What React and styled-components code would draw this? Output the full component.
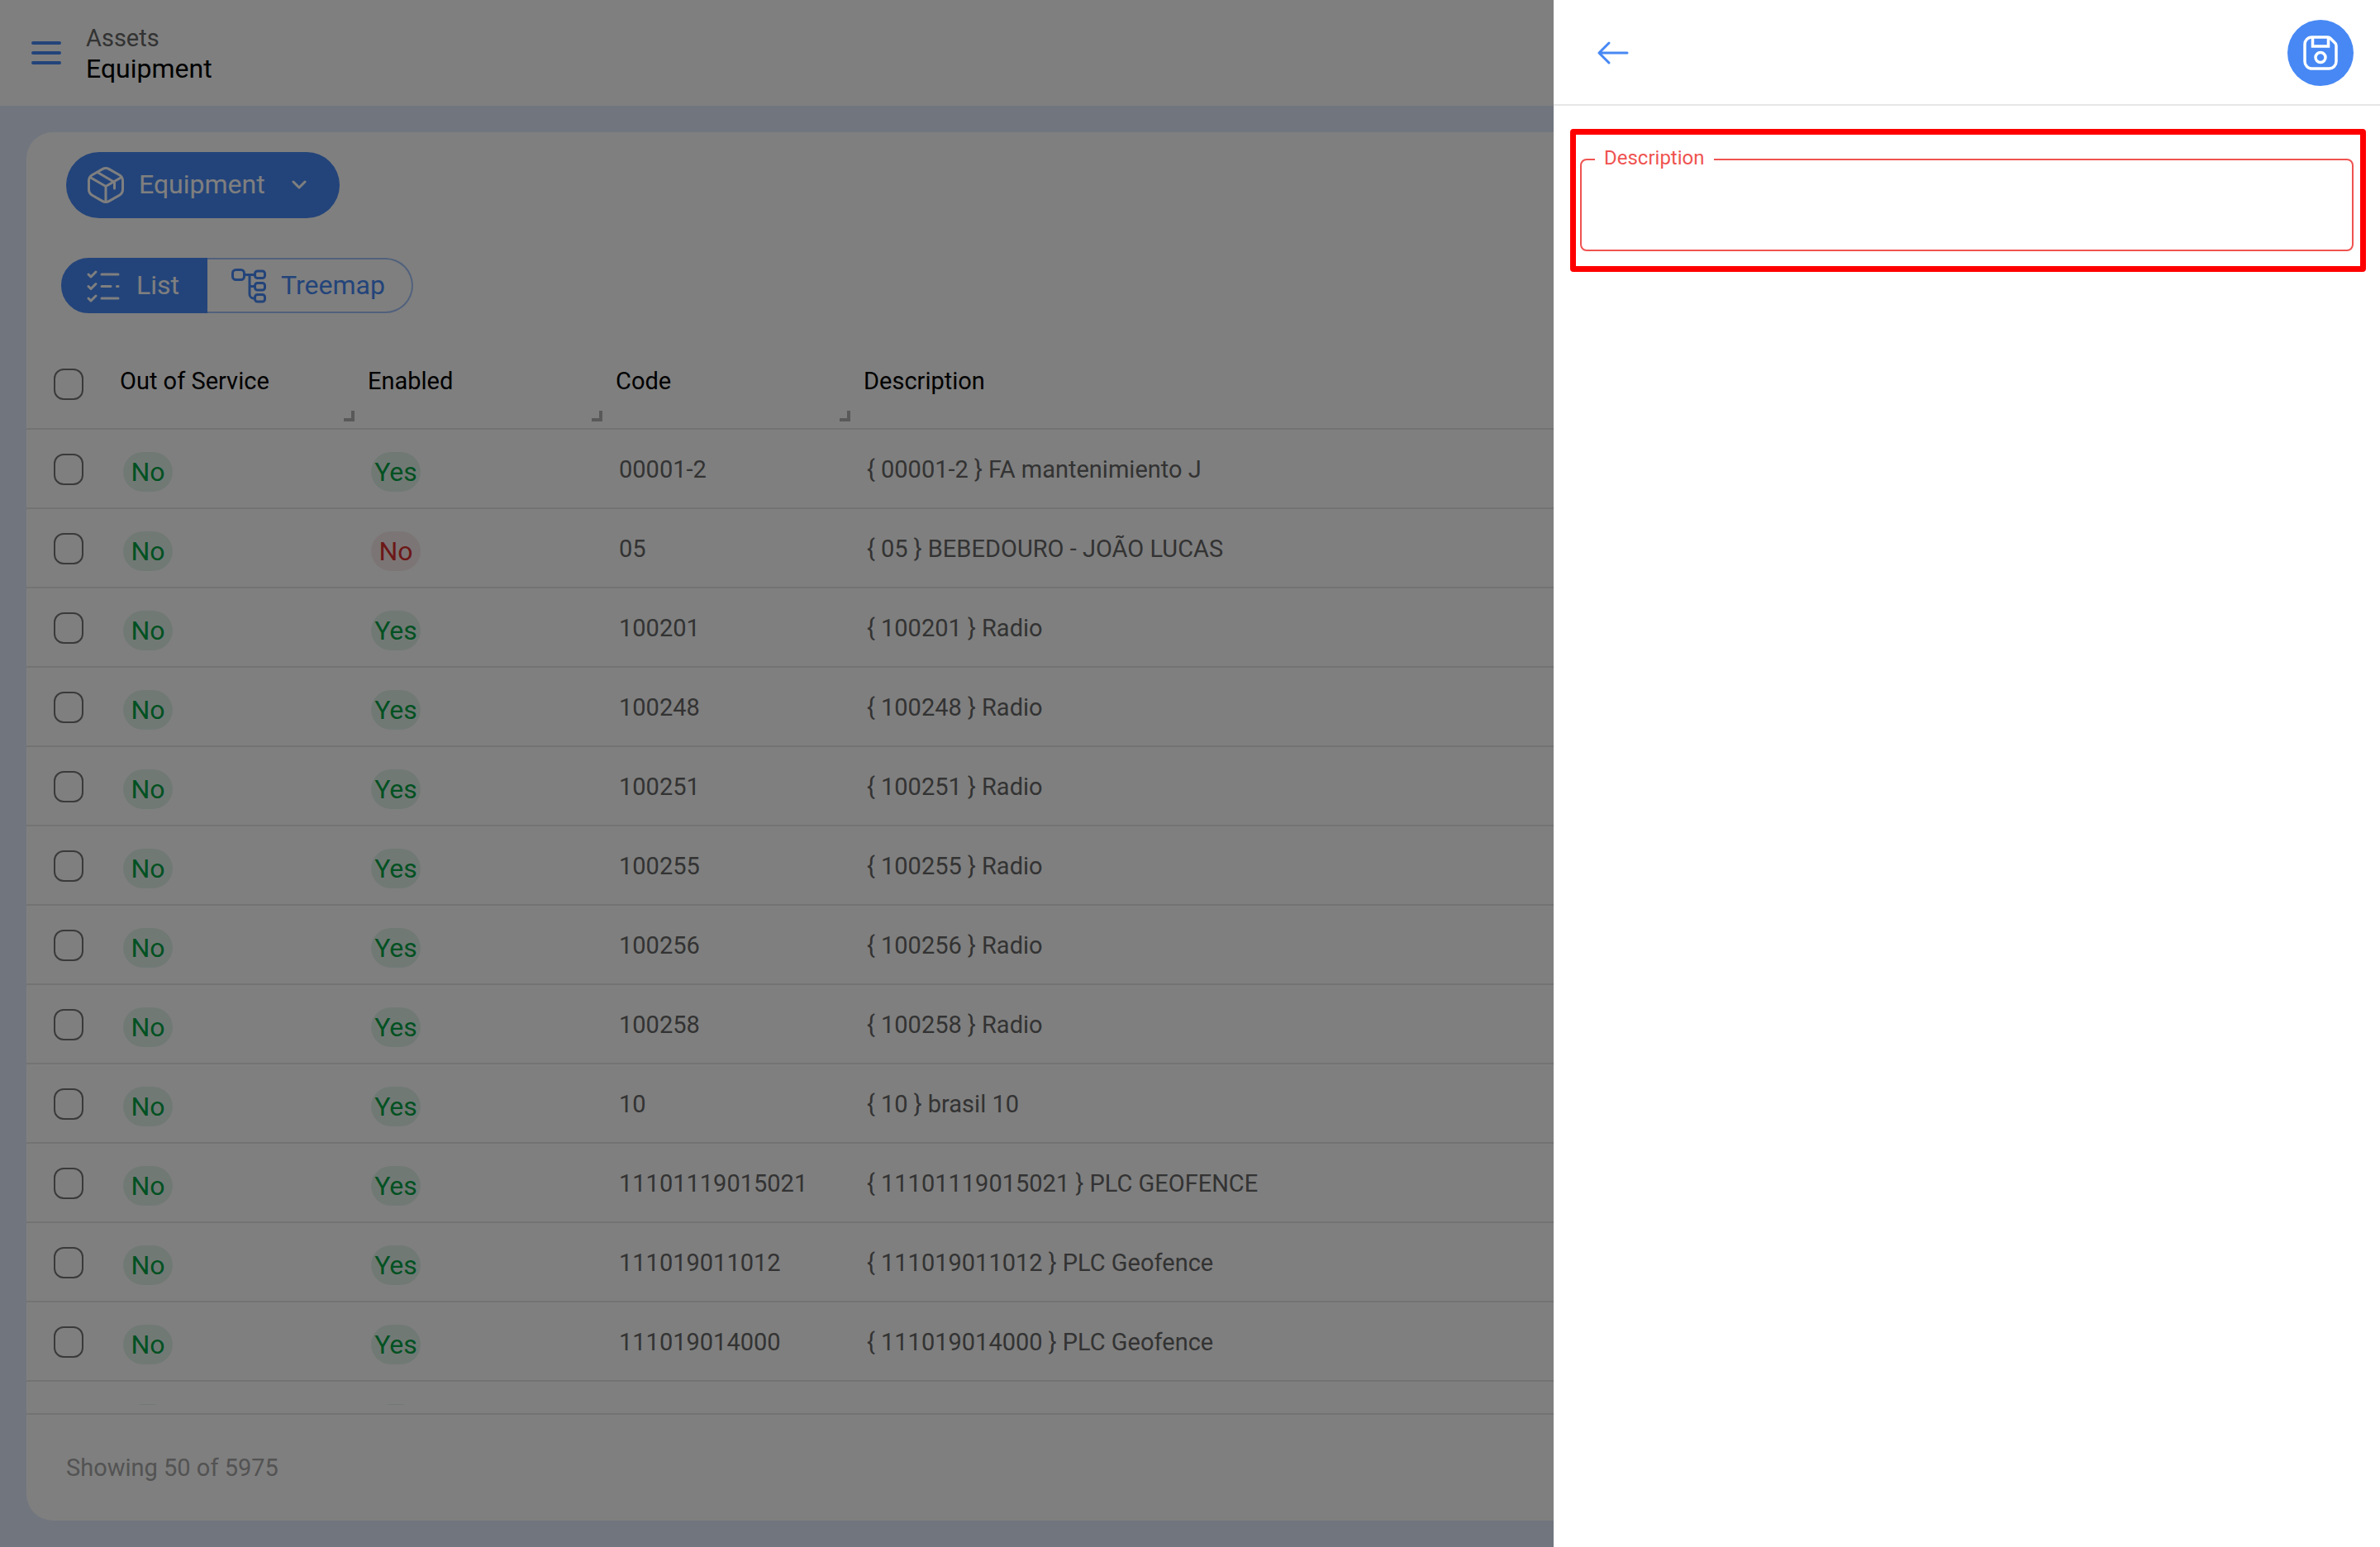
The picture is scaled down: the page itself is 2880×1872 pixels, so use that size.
import React from "react";
import styled, { createGlobalStyle, css } from "styled-components";

const rows = [
  { out: "No", enabled: "Yes", code: "00001-2", description: "{ 00001-2 } FA mantenimiento J" },
  { out: "No", enabled: "No", code: "05", description: "{ 05 } BEBEDOURO - JOÃO LUCAS" },
  { out: "No", enabled: "Yes", code: "100201", description: "{ 100201 } Radio" },
  { out: "No", enabled: "Yes", code: "100248", description: "{ 100248 } Radio" },
  { out: "No", enabled: "Yes", code: "100251", description: "{ 100251 } Radio" },
  { out: "No", enabled: "Yes", code: "100255", description: "{ 100255 } Radio" },
  { out: "No", enabled: "Yes", code: "100256", description: "{ 100256 } Radio" },
  { out: "No", enabled: "Yes", code: "100258", description: "{ 100258 } Radio" },
  { out: "No", enabled: "Yes", code: "10", description: "{ 10 } brasil 10" },
  { out: "No", enabled: "Yes", code: "11101119015021", description: "{ 11101119015021 } PLC GEOFENCE" },
  { out: "No", enabled: "Yes", code: "111019011012", description: "{ 111019011012 } PLC Geofence" },
  { out: "No", enabled: "Yes", code: "111019014000", description: "{ 111019014000 } PLC Geofence" },
];

const blue = "#4788f4";
const line = "#e6e6e6";
const error = "#ef5350";

const GlobalStyle = createGlobalStyle`
  * {
    box-sizing: border-box;
  }
  body {
    margin: 0;
    font-family: Roboto, "Liberation Sans", sans-serif;
    font-size: 29px;
    color: #000;
  }
  button, input {
    font-family: inherit;
  }
`;

const Page = styled.div`
  display: flex;
  flex-direction: column;
  height: 100vh;
  background: #e2eafc;
`;

const TopBar = styled.header`
  display: flex;
  align-items: center;
  gap: 20px;
  height: 128px;
  padding: 0 28px;
  background: #fff;
`;

const IconButton = styled.button`
  display: flex;
  align-items: center;
  justify-content: center;
  width: ${({ $size }) => $size}px;
  height: ${({ $size }) => $size}px;
  padding: 0;
  border: 0;
  border-radius: 50%;
  color: ${({ $filled }) => ($filled ? "#fff" : blue)};
  background: ${({ $filled }) => ($filled ? blue : "transparent")};
`;

const Titles = styled.div`
  display: flex;
  flex-direction: column;
  padding-top: 2px;
`;

const Section = styled.span`
  line-height: 36px;
  color: #666;
`;

const Title = styled.h1`
  margin: 0;
  font-size: 32px;
  font-weight: 400;
  line-height: 38px;
`;

const Card = styled.main`
  flex: 1;
  display: flex;
  flex-direction: column;
  min-height: 0;
  margin: 32px;
  border-radius: 32px;
  background: #fff;
`;

const Toolbar = styled.div`
  display: flex;
  flex-direction: column;
  align-items: flex-start;
  gap: 48px;
  padding: 24px 42px 37px;
`;

const ButtonLabel = styled.span`
  padding-bottom: 2px;
`;

const MenuButton = styled.button`
  display: flex;
  align-items: center;
  gap: 16px;
  height: 80px;
  margin-left: 6px;
  padding: 0 40px 0 24px;
  border: 0;
  border-radius: 40px;
  font-size: 32px;
  color: #fff;
  background: ${blue};

  svg:last-child {
    margin-left: 16px;
  }
`;

const Toggle = styled.div`
  display: flex;
`;

const ToggleButton = styled.button`
  display: flex;
  align-items: center;
  gap: 14px;
  height: 67px;
  padding: 0 32px 0 27px;
  border: 2px solid ${blue};
  font-size: 32px;

  ${({ $active }) =>
    $active
      ? css`
          border-radius: 34px 0 0 34px;
          color: #fff;
          background: ${blue};
        `
      : css`
          border-color: #a3c3f9;
          border-left: 0;
          border-radius: 0 34px 34px 0;
          color: ${blue};
          background: #fff;
        `}
`;

const TableWrap = styled.div`
  flex: 1;
  min-height: 0;
  margin-bottom: 10px;
  overflow: hidden;
`;

const Table = styled.table`
  width: 100%;
  table-layout: fixed;
  border-collapse: separate;
  border-spacing: 0;
`;

const HeadCell = styled.th`
  position: relative;
  width: ${({ $width }) => ($width ? `${$width}px` : "auto")};
  height: 104px;
  padding: 0 0 12px 12px;
  border-bottom: 2px solid ${line};
  font-weight: 400;
  text-align: left;
`;

const ResizeMark = styled.i`
  position: absolute;
  right: 4px;
  bottom: 8px;
  width: 13px;
  height: 13px;
  border: solid #b3b3b3;
  border-width: 0 4px 4px 0;
`;

const CheckCell = styled.td`
  width: 101px;
  height: 96px;
  padding: 2px 0 0 33px;
  border-bottom: 2px solid ${line};
`;

const HeadCheckCell = styled(CheckCell)`
  padding-bottom: 6px;
`;

const Cell = styled.td`
  height: 96px;
  padding: 2px 0 0 16px;
  border-bottom: 2px solid ${line};
  color: #666;
`;

const Checkbox = styled.input.attrs({ type: "checkbox" })`
  appearance: none;
  display: block;
  width: 36px;
  height: 38px;
  margin: 0;
  border: 2px solid #757575;
  border-radius: 12px;
`;

const Pill = styled.span`
  display: flex;
  align-items: center;
  justify-content: center;
  width: 60px;
  height: 48px;
  margin-top: 6px;
  border-radius: 24px;
  font-size: 32px;
  color: ${({ $bad }) => ($bad ? "#d9302f" : "#00a344")};
  background: ${({ $bad }) => ($bad ? "#f9ebea" : "#e3f3eb")};
`;

const Footer = styled.footer`
  display: flex;
  align-items: center;
  height: 130px;
  padding: 0 48px;
  border-top: 2px solid ${line};
  color: #a6a6a6;
`;

const Backdrop = styled.div`
  position: fixed;
  inset: 0;
  background: rgba(0, 0, 0, 0.5);
`;

const Drawer = styled.aside`
  position: fixed;
  top: 0;
  right: 0;
  bottom: 0;
  width: 1000px;
  max-width: 100%;
  background: #fff;
`;

const DrawerHeader = styled.div`
  display: flex;
  align-items: center;
  justify-content: space-between;
  height: 128px;
  padding: 2px 32px 0 48px;
  border-bottom: 2px solid ${line};
`;

const Highlight = styled.div`
  margin: 28px 17px 0 20px;
  padding: 14px 8px 18px 5px;
  border: 7px solid #f00;
  border-radius: 4px;
`;

const Field = styled.fieldset`
  min-width: 0;
  margin: 0;
  padding: 0 16px;
  border: 2px solid ${error};
  border-radius: 8px;
`;

const FieldLegend = styled.legend`
  padding: 0 11px 4px;
  font-size: 24px;
  line-height: 28px;
  color: ${error};
`;

const FieldInput = styled.input`
  display: block;
  width: 100%;
  height: 93px;
  padding: 0 12px;
  border: 0;
  outline: 0;
  font-size: 32px;
  background: transparent;
`;

const strokeProps = {
  fill: "none",
  stroke: "currentColor",
  strokeLinecap: "round",
  strokeLinejoin: "round",
  "aria-hidden": true,
};

const MenuIcon = () => (
  <svg width="36" height="30" viewBox="0 0 36 30" strokeWidth="4" {...strokeProps}>
    <path d="M2 3h32M2 15h32M2 27h32" />
  </svg>
);

const BoxIcon = () => (
  <svg width="48" height="48" viewBox="0 0 48 48" strokeWidth="3" {...strokeProps}>
    <path d="M20 4.600a8 8 0 0 1 8 0l12.500 7.200a8 8 0 0 1 4 6.900v10.600a8 8 0 0 1-4 6.900L28 43.400a8 8 0 0 1-8 0L7.500 36.200a8 8 0 0 1-4-6.900V18.700a8 8 0 0 1 4-6.900z" />
    <path d="M5 14.500l19 11 19-11M24 25.500V44M14 8.500l20.500 12V28" />
  </svg>
);

const ChevronIcon = () => (
  <svg width="18" height="12" viewBox="0 0 18 12" strokeWidth="3" {...strokeProps}>
    <path d="M2 2l7 7 7-7" />
  </svg>
);

const ListIcon = () => (
  <svg width="48" height="48" viewBox="0 0 48 48" strokeWidth="3" {...strokeProps}>
    <path d="M4 10l3 3 6-6M4 24.500l3 3 6-6M4 39l3 3 6-6" />
    <path d="M20 10h20M20 24.500h11M38.500 24.500h1.500M20 39h20" />
  </svg>
);

const TreeIcon = () => (
  <svg width="48" height="48" viewBox="0 0 48 48" strokeWidth="3" {...strokeProps}>
    <rect x="3.500" y="4.500" width="14" height="12" rx="4" />
    <rect x="30.500" y="6" width="12" height="8.500" rx="3" />
    <rect x="30.500" y="20.500" width="12" height="8.500" rx="3" />
    <rect x="30.500" y="34.500" width="12" height="8.500" rx="3" />
    <path d="M17.500 10.500h13M24 10.500v23.500a5 5 0 0 0 5 5h1.500M24 24.500h6.500" />
  </svg>
);

const ArrowIcon = () => (
  <svg width="40" height="32" viewBox="0 0 40 32" strokeWidth="3" {...strokeProps}>
    <path d="M37 16H3M15 4L3 16l12 12" />
  </svg>
);

const SaveIcon = () => (
  <svg width="42" height="42" viewBox="0 0 42 42" strokeWidth="3.500" {...strokeProps}>
    <path d="M10.500 2h19.500a4 4 0 0 1 2.800 1.200l5.500 5.500a4 4 0 0 1 1.700 3.300v19.500a8.500 8.500 0 0 1-8.500 8.500h-21A8.500 8.500 0 0 1 2 31.500v-21A8.500 8.500 0 0 1 10.500 2z" />
    <path d="M11.500 2v11h19V2" strokeLinecap="butt" strokeLinejoin="miter" />
    <circle cx="21" cy="26.500" r="6" />
  </svg>
);

const EquipmentRow = ({ out, enabled, code, description }) => (
  <tr>
    <CheckCell>
      <Checkbox aria-label={code} />
    </CheckCell>
    <Cell>
      <Pill>{out}</Pill>
    </Cell>
    <Cell>
      <Pill $bad={enabled === "No"}>{enabled}</Pill>
    </Cell>
    <Cell>{code}</Cell>
    <Cell>{description}</Cell>
  </tr>
);

const LoadingRow = () => (
  <tr aria-hidden="true">
    <CheckCell />
    <Cell>
      <Pill />
    </Cell>
    <Cell>
      <Pill />
    </Cell>
    <Cell colSpan={2} />
  </tr>
);

const EquipmentTable = () => (
  <Table>
    <thead>
      <tr>
        <HeadCheckCell as="th">
          <Checkbox aria-label="All" />
        </HeadCheckCell>
        {["Out of Service", "Enabled", "Code"].map((name) => (
          <HeadCell key={name} $width={300}>
            {name}
            <ResizeMark />
          </HeadCell>
        ))}
        <HeadCell>Description</HeadCell>
      </tr>
    </thead>
    <tbody>
      {rows.map((row) => (
        <EquipmentRow key={row.code} {...row} />
      ))}
      <LoadingRow />
    </tbody>
  </Table>
);

const App = () => {
  return (
    <>
      <GlobalStyle />
      <Page>
        <TopBar>
          <IconButton $size={56} aria-label="Menu">
            <MenuIcon />
          </IconButton>
          <Titles>
            <Section>Assets</Section>
            <Title>Equipment</Title>
          </Titles>
        </TopBar>
        <Card>
          <Toolbar>
            <MenuButton>
              <BoxIcon />
              <ButtonLabel>Equipment</ButtonLabel>
              <ChevronIcon />
            </MenuButton>
            <Toggle>
              <ToggleButton $active>
                <ListIcon />
                <ButtonLabel>List</ButtonLabel>
              </ToggleButton>
              <ToggleButton>
                <TreeIcon />
                <ButtonLabel>Treemap</ButtonLabel>
              </ToggleButton>
            </Toggle>
          </Toolbar>
          <TableWrap>
            <EquipmentTable />
          </TableWrap>
          <Footer>Showing 50 of 5975</Footer>
        </Card>
      </Page>
      <Backdrop />
      <Drawer>
        <DrawerHeader>
          <IconButton $size={48} aria-label="Back">
            <ArrowIcon />
          </IconButton>
          <IconButton $size={80} $filled aria-label="Save">
            <SaveIcon />
          </IconButton>
        </DrawerHeader>
        <Highlight>
          <Field>
            <FieldLegend>
              <label htmlFor="description">Description</label>
            </FieldLegend>
            <FieldInput id="description" type="text" />
          </Field>
        </Highlight>
      </Drawer>
    </>
  );
};

export default App;
